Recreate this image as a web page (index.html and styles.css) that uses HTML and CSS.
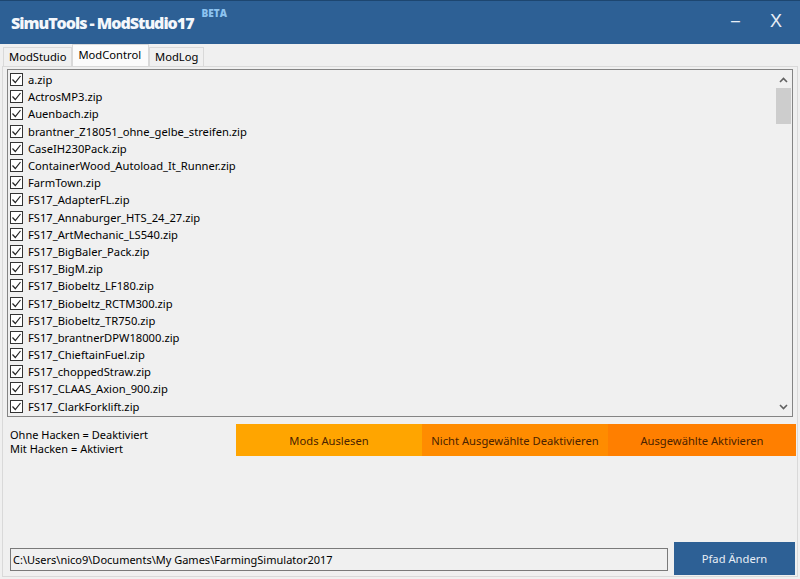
FILE: index.html
```html
<!DOCTYPE html>
<html>
<head>
<meta charset="utf-8">
<link rel="stylesheet" href="styles.css">
</head>
<body>
<div class="window">
  <header class="titlebar">
    <div class="title">SimuTools - ModStudio17</div>
    <div class="beta">BETA</div>
    <div class="controls">
      <span class="min">–</span>
      <span class="close">X</span>
    </div>
  </header>
  <nav class="tabs">
    <div class="tab">ModStudio</div>
    <div class="tab active">ModControl</div>
    <div class="tab">ModLog</div>
  </nav>
  <section class="panel">
    <div class="listbox">
      <ul class="items">
        <li><span class="cb"></span>a.zip</li>
        <li><span class="cb"></span>ActrosMP3.zip</li>
        <li><span class="cb"></span>Auenbach.zip</li>
        <li><span class="cb"></span>brantner_Z18051_ohne_gelbe_streifen.zip</li>
        <li><span class="cb"></span>CaseIH230Pack.zip</li>
        <li><span class="cb"></span>ContainerWood_Autoload_It_Runner.zip</li>
        <li><span class="cb"></span>FarmTown.zip</li>
        <li><span class="cb"></span>FS17_AdapterFL.zip</li>
        <li><span class="cb"></span>FS17_Annaburger_HTS_24_27.zip</li>
        <li><span class="cb"></span>FS17_ArtMechanic_LS540.zip</li>
        <li><span class="cb"></span>FS17_BigBaler_Pack.zip</li>
        <li><span class="cb"></span>FS17_BigM.zip</li>
        <li><span class="cb"></span>FS17_Biobeltz_LF180.zip</li>
        <li><span class="cb"></span>FS17_Biobeltz_RCTM300.zip</li>
        <li><span class="cb"></span>FS17_Biobeltz_TR750.zip</li>
        <li><span class="cb"></span>FS17_brantnerDPW18000.zip</li>
        <li><span class="cb"></span>FS17_ChieftainFuel.zip</li>
        <li><span class="cb"></span>FS17_choppedStraw.zip</li>
        <li><span class="cb"></span>FS17_CLAAS_Axion_900.zip</li>
        <li><span class="cb"></span>FS17_ClarkForklift.zip</li>
      </ul>
      <div class="scrollbar">
        <svg class="arrow" width="9" height="6" viewBox="0 0 9 6"><path d="M1 5 L4.5 1.5 L8 5" fill="none" stroke="#606060" stroke-width="1.6"/></svg>
        <div class="track"><div class="thumb"></div></div>
        <svg class="arrow" width="9" height="6" viewBox="0 0 9 6"><path d="M1 1 L4.5 4.5 L8 1" fill="none" stroke="#606060" stroke-width="1.6"/></svg>
      </div>
    </div>
    <div class="actions">
      <div class="legend">
        <div>Ohne Hacken = Deaktiviert</div>
        <div>Mit Hacken = Aktiviert</div>
      </div>
      <div class="btn b1">Mods Auslesen</div>
      <div class="btn b2">Nicht Ausgewählte Deaktivieren</div>
      <div class="btn b3">Ausgewählte Aktivieren</div>
    </div>
    <div class="pathrow">
      <div class="pathbox">C:\Users\nico9\Documents\My Games\FarmingSimulator2017</div>
      <div class="pathbtn">Pfad Ändern</div>
    </div>
  </section>
</div>
</body>
</html>
```
FILE: styles.css
```css
html, body {
  margin: 0;
  padding: 0;
  background: #f0f0f0;
}
body {
  width: 800px;
  height: 579px;
  overflow: hidden;
  font-family: "Noto Sans", "Open Sans", sans-serif;
  font-size: 11.2px;
  color: #000;
}
.window {
  display: flex;
  flex-direction: column;
  height: 579px;
}
.titlebar {
  height: 43px;
  background: #2d6095;
  border-top: 1px solid #1d4670;
  display: flex;
  align-items: flex-start;
  color: #fff;
}
.title {
  font-family: "Open Sans", sans-serif;
  font-weight: 800;
  font-size: 16px;
  letter-spacing: -1px;
  margin: 11px 0 0 11px;
  color: #f4f7fb;
  white-space: nowrap;
}
.beta {
  margin: 5px 0 0 8px;
  font-family: "Open Sans", sans-serif;
  font-size: 10px;
  font-weight: 800;
  color: #8cc3f0;
}
.controls {
  display: flex;
  gap: 30px;
  margin: 10px 18px 0 auto;
  font-family: "Liberation Sans", sans-serif;
  font-size: 18px;
  color: #e8eef5;
}
.min { font-size: 16px; margin-top: 1px; }
.tabs {
  height: 22px;
  display: flex;
  align-items: flex-end;
  padding-left: 3px;
}
.tab {
  height: 18px;
  line-height: 18px;
  padding: 0 5px;
  border: 1px solid #d9d9d9;
  border-bottom: none;
  background: #f0f0f0;
  font-size: 11.2px;
  color: #000;
}
.tab.active {
  height: 21px;
  line-height: 19px;
  background: #fbfbfb;
  padding: 0 7px 0 5px;
}
.panel {
  flex: 1;
  margin: 0 2px 2px 2px;
  border: 1px solid #d9d9d9;
  display: flex;
  flex-direction: column;
  padding: 2px 1px 0 4px;
}
.listbox {
  height: 346px;
  width: 784px;
  border: 1px solid #848484;
  background: #f0f0f0;
  display: flex;
}
.items {
  list-style: none;
  margin: 0;
  padding: 1px 0 0 2px;
  flex: 1;
}
.items li {
  height: 17.2px;
  display: flex;
  align-items: center;
  gap: 5px;
  white-space: nowrap;
}
.cb {
  width: 11px;
  height: 11px;
  border: 1px solid #333;
  background: #fff url("data:image/svg+xml;utf8,<svg xmlns='http://www.w3.org/2000/svg' width='11' height='11'><path d='M1.5 5.5 L4.3 8.5 L9.5 2' fill='none' stroke='%23222' stroke-width='1.2'/></svg>") no-repeat center;
  flex: none;
}
.scrollbar {
  width: 17px;
  display: flex;
  flex-direction: column;
  align-items: center;
  padding: 7px 0 6px 0;
}
.arrow { flex: none; }
.track {
  flex: 1;
  width: 15px;
  padding-top: 5px;
}
.thumb {
  height: 36px;
  background: #cdcdcd;
}
.actions {
  display: flex;
  align-items: stretch;
  margin-top: 7px;
  height: 32px;
}
.legend {
  width: 229px;
  padding: 4px 0 0 3px;
  box-sizing: border-box;
  line-height: 14px;
  font-size: 11px;
}
.btn {
  width: 186px;
  display: flex;
  align-items: center;
  justify-content: center;
  color: #4a2200;
}
.b1 { background: #ffa500; }
.b2 { background: #ff8c00; }
.b3 { background: #ff7f00; width: 188px; }
.pathrow {
  margin-top: auto;
  margin-bottom: 1px;
  display: flex;
  align-items: flex-end;
  gap: 6px;
}
.pathbox {
  width: 654px;
  height: 21px;
  line-height: 21px;
  border: 1px solid #7a7a7a;
  padding-left: 2px;
  margin: 0 0 4px 3px;
  background: #f0f0f0;
  font-size: 11px;
}
.pathbtn {
  width: 121px;
  height: 33px;
  background: #2d6095;
  color: #e8eef5;
  display: flex;
  align-items: center;
  justify-content: center;
}
```
